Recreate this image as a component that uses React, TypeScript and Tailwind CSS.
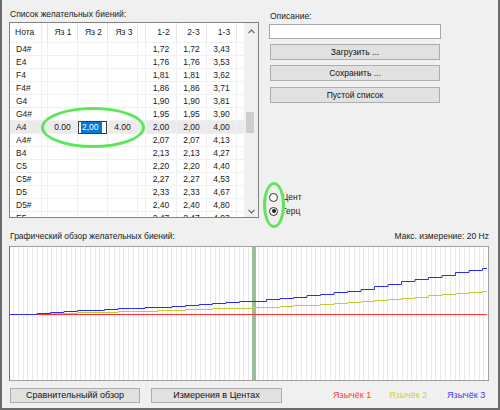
import React from "react";

const rows: [string, string, string, string][] = [
  ["D4#", "1,72", "1,72", "3,43"],
  ["E4", "1,76", "1,76", "3,53"],
  ["F4", "1,81", "1,81", "3,62"],
  ["F4#", "1,86", "1,86", "3,71"],
  ["G4", "1,90", "1,90", "3,81"],
  ["G4#", "1,95", "1,95", "3,90"],
  ["A4", "2,00", "2,00", "4,00"],
  ["A4#", "2,07", "2,07", "4,13"],
  ["B4", "2,13", "2,13", "4,27"],
  ["C5", "2,20", "2,20", "4,40"],
  ["C5#", "2,27", "2,27", "4,53"],
  ["D5", "2,33", "2,33", "4,67"],
  ["D5#", "2,40", "2,40", "4,80"],
  ["E5", "2,47", "2,47", "4,93"],
];

const blueAnchors: [number, number][] = [
  [0, 67],
  [15, 66.7],
  [73, 63],
  [160, 59],
  [203, 55.7],
  [238, 54],
  [260, 52],
  [340, 43.7],
  [390, 34.7],
  [440, 26.3],
  [477, 20],
];

function interp(x: number): number {
  for (let i = 0; i < blueAnchors.length - 1; i++) {
    const [x0, y0] = blueAnchors[i];
    const [x1, y1] = blueAnchors[i + 1];
    if (x >= x0 && x <= x1) return y0 + ((y1 - y0) * (x - x0)) / (x1 - x0);
  }
  return blueAnchors[blueAnchors.length - 1][1];
}

function stairPath(f: (x: number) => number, x0: number, x1: number, step: number) {
  let d = "";
  let x = x0;
  let first = true;
  while (x < x1) {
    const nx = Math.min(x + step, x1);
    const y = Math.round(f(x)) + 0.5;
    d += first ? `M${x} ${y} ` : `L${x} ${y} `;
    d += `L${nx} ${y} `;
    first = false;
    x = nx;
  }
  return d;
}

function Chevron({ up }: { up?: boolean }) {
  return (
    <svg width="7" height="5" viewBox="0 0 7 5">
      <path
        d={up ? "M0.5 4.2 L3.5 1 L6.5 4.2" : "M0.5 0.8 L3.5 4 L6.5 0.8"}
        fill="none"
        stroke="#606060"
        strokeWidth="1.1"
      />
    </svg>
  );
}

function Grid() {
  const headerCell = "h-full flex items-center border-r border-[#e5e5e5]";
  const cell = "h-full flex items-center border-r border-[#f0f0f0]";
  return (
    <div className="mt-[2px] h-[196px] w-[250px] border border-[#828282] bg-white flex overflow-hidden">
      <div className="w-[234px] flex flex-col">
        <div className="h-[20px] flex border-b border-[#f0f0f0] shrink-0">
          <div className={`${headerCell} w-[32px] pl-[5px]`}>Нота</div>
          <div className={`${headerCell} w-[6px]`}></div>
          <div className={`${headerCell} w-[30px] justify-center pl-[1px]`}>Яз 1</div>
          <div className={`${headerCell} w-[30px] justify-center pl-[2px]`}>Яз 2</div>
          <div className={`${headerCell} w-[30px] justify-center pl-[3px]`}>Яз 3</div>
          <div className={`${headerCell} w-[8px]`}></div>
          <div className={`${headerCell} w-[31px] justify-center pl-[5px]`}>1-2</div>
          <div className={`${headerCell} w-[30px] justify-center pl-[4px]`}>2-3</div>
          <div className={`${headerCell} w-[30px] justify-center pl-[5px]`}>1-3</div>
          <div className="w-[7px]"></div>
        </div>
        {rows.map((r, i) => {
          const sel = r[0] === "A4";
          return (
            <div
              key={i}
              className={`h-[13px] flex shrink-0 border-b border-[#f0f0f0] ${sel ? "bg-[#ebebeb]" : ""}`}
            >
              <div className={`${cell} w-[32px] pl-[6px]`}>{r[0]}</div>
              <div className={`${cell} w-[6px]`}></div>
              <div className={`${cell} w-[30px] justify-center`}>{sel ? "0.00" : ""}</div>
              <div className={`${cell} w-[30px] ${sel ? "" : "justify-center"}`}>
                {sel ? (
                  <div className="h-[13px] w-[29px] bg-white border border-[#3c3c3c] flex items-center pl-[2px]">
                    <span className="bg-[#0078d7] text-white h-[11px] w-[21px] flex items-center pl-[1px]">2,00</span>
                  </div>
                ) : (
                  ""
                )}
              </div>
              <div className={`${cell} w-[30px] justify-center`}>{sel ? "4.00" : ""}</div>
              <div className={`${cell} w-[8px]`}></div>
              <div className={`${cell} w-[31px] justify-center`}>{r[1]}</div>
              <div className={`${cell} w-[30px] justify-center`}>{r[2]}</div>
              <div className={`${cell} w-[30px] justify-center`}>{r[3]}</div>
              <div className="w-[7px]"></div>
            </div>
          );
        })}
      </div>
      <div className="w-[14px] bg-[#f0f0f0] flex flex-col items-center">
        <div className="h-[16px] flex items-center justify-center">
          <Chevron up />
        </div>
        <div className="mt-[73px] h-[21px] w-[8px] bg-[#cdcdcd] -ml-[2px]"></div>
        <div className="mt-[72px] h-[12px] flex items-center justify-center">
          <Chevron />
        </div>
      </div>
    </div>
  );
}

function Btn({ children, w, h }: { children: React.ReactNode; w: string; h: string }) {
  return (
    <div
      className={`${w} ${h} bg-[#e1e1e1] border border-[#adadad] flex items-center justify-center text-[#111] whitespace-nowrap`}
    >
      {children}
    </div>
  );
}

function Chart() {
  const lines: number[] = [];
  for (let i = 0; i < 100; i++) {
    const x = 3 + i * 4.8;
    if (x < 478) lines.push(Math.round(x) + 0.5);
  }
  const blue = (x: number) => interp(x);
  const yellow = (x: number) => 67 - (67 - interp(x)) / 2;
  return (
    <div className="mt-[4px] ml-[7px] w-[480px] h-[135px] bg-white border border-[#a0a0a0] border-l-[#707070]">
      <svg width="478" height="133" viewBox="0 0 478 133" className="block">
        {lines.map((x, i) => (
          <line key={i} x1={x} y1={0} x2={x} y2={133} stroke="#e8e8e8" strokeWidth="1" />
        ))}
        <rect x="242" y="0" width="4" height="133" fill="#9cbd9c" />
        <line x1="15" y1="67.5" x2="477" y2="67.5" stroke="#ff2e2e" strokeWidth="1" />
        <path d={stairPath(yellow, 0, 477, 13.5)} fill="none" stroke="#c9c92c" strokeWidth="1" />
        <path d={stairPath(blue, 0, 477, 13.5)} fill="none" stroke="#2c2cf0" strokeWidth="1" />
      </svg>
    </div>
  );
}

export default function App() {
  return (
    <div
      className="relative w-[500px] h-[410px] bg-[#f0f0f0] border-l-2 border-r-2 border-b-2 border-[#6b6b6b] overflow-hidden text-[8.5px] leading-none text-[#1a1a1a]"
      style={{ fontFamily: "'Liberation Sans', Arial, sans-serif" }}
    >
      <div className="flex pl-[7px] pt-[8px] h-[218px]">
        <div className="w-[250px] flex flex-col">
          <div className="h-[12px] flex items-center pl-[1px]">Список желательных биений:</div>
          <Grid />
        </div>
        <div className="ml-[10px] w-[172px] flex flex-col">
          <div className="mt-[2px] h-[12px] flex items-center pl-[1px]">Описание:</div>
          <div className="mt-[2px] h-[16px] w-[172px] bg-white border border-[#a6a6a6]"></div>
          <div className="mt-[5px] ml-[1px]">
            <Btn w="w-[170px]" h="h-[16px]">Загрузить ...</Btn>
          </div>
          <div className="mt-[5px] ml-[1px]">
            <Btn w="w-[170px]" h="h-[16px]">Сохранить ...</Btn>
          </div>
          <div className="mt-[6px] ml-[1px]">
            <Btn w="w-[170px]" h="h-[16px]">Пустой список</Btn>
          </div>
          <div className="mt-[87px] flex flex-col">
            <div className="h-[14px] flex items-center">
              <div className="w-[9px] h-[9px] rounded-full border border-[#333] bg-white"></div>
              <span className="ml-[4px]">Цент</span>
            </div>
            <div className="h-[14px] flex items-center">
              <div className="w-[9px] h-[9px] rounded-full border border-[#333] bg-white flex items-center justify-center">
                <div className="w-[4px] h-[4px] rounded-full bg-[#222]"></div>
              </div>
              <span className="ml-[4px]">Герц</span>
            </div>
          </div>
        </div>
      </div>

      <div className="mt-[12px] h-[12px] flex items-center justify-between pl-[8px] pr-[9px]">
        <span>Графический обзор желательных биений:</span>
        <span>Макс. измерение: 20 Hz</span>
      </div>

      <Chart />

      <div className="mt-[7px] ml-[8px] flex items-center text-[9px] whitespace-nowrap">
        <Btn w="w-[130px]" h="h-[15px]">Сравнительныйй обзор</Btn>
        <div className="ml-[11px]">
          <Btn w="w-[131px]" h="h-[15px]">Измерения в Центах</Btn>
        </div>
        <span className="ml-[51px] w-[56px] text-[#ff3838]">Язычёк 1</span>
        <span className="w-[58px] text-[#cfcf3c]">Язычёк 2</span>
        <span className="text-[#3a3aff]">Язычёк 3</span>
      </div>

      <div className="absolute left-[39px] top-[107px] w-[104px] h-[41px] rounded-[50%] border-[3px] border-[#5ee65a]"></div>
      <div className="absolute left-[261px] top-[182px] w-[22px] h-[46px] rounded-[50%] border-[3px] border-[#5ee65a]"></div>
    </div>
  );
}
